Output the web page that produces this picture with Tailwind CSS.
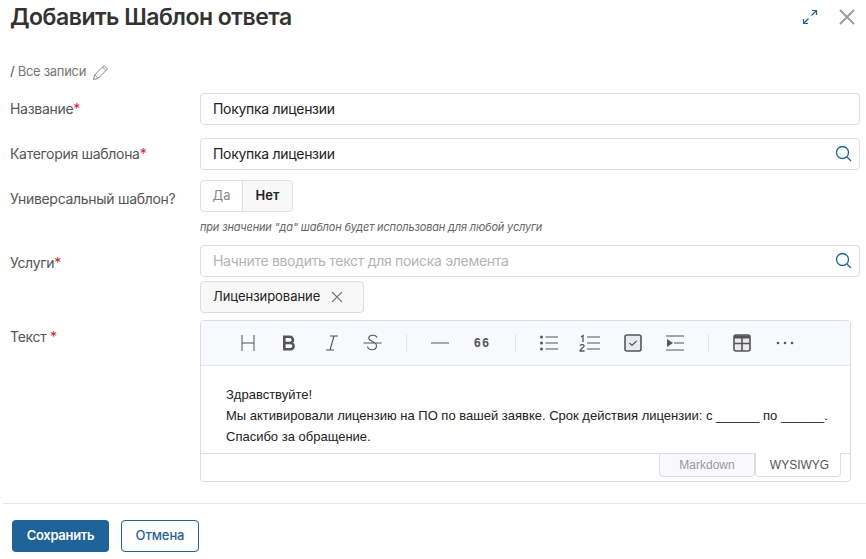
<!DOCTYPE html>
<html lang="ru">
<head>
<meta charset="utf-8">
<script src="https://cdn.jsdelivr.net/npm/@tailwindcss/browser@4"></script>
</head>
<body class="bg-white">
<div class="w-[866px] h-[559px] overflow-hidden flex flex-col font-['Inter',sans-serif] text-[#333]">
  <header class="h-[35px] pl-[10px] pr-[10px] flex items-center justify-between">
    <h1 class="text-[23px] tracking-[-0.5px] leading-[35px] font-semibold text-[#333]">Добавить Шаблон ответа</h1>
    <div class="flex items-center gap-[20px] mt-[-1px]">
      <svg width="16" height="16" viewBox="0 0 16 16" fill="none" stroke="#1f6499" stroke-width="1.2"><path d="M9.5 6.5 14.5 1.5M10 1.5h4.5V6M6.5 9.5l-5 5M1.5 10v4.500H6"/></svg>
      <svg width="18" height="18" viewBox="0 0 18 18" fill="none" stroke="#999" stroke-width="1.8"><path d="M2 2l14 14M16 2 2 16"/></svg>
    </div>
  </header>
  <div class="mt-[28px] pl-[10px] h-[18px] flex items-center gap-[6px] text-[13px] tracking-[-0.3px] text-[#777]">
    <span><span class="text-[#555]">/</span> Все записи</span>
    <svg width="17" height="17" viewBox="0 0 17 17" fill="none" stroke="#888" stroke-width="1"><path d="M12 1.5 15.5 5l-9.5 9.5-4.5 1 1-4.500zM10.500 3l3.500 3.500M3 11l3 3"/></svg>
  </div>
  <form class="mt-[12px] pl-[10px] pr-[6px] flex flex-col tracking-[-0.3px]">
    <div class="flex items-start">
      <label class="w-[190px] text-[14px] leading-[32px] text-[#555]">Название<span class="text-[#d9182d]">*</span></label>
      <div class="w-[660px] h-[32px] border border-[#dddde6] rounded-[4px] px-[12px] text-[14px] leading-[30px] text-[#222]">Покупка лицензии</div>
    </div>
    <div class="flex items-start mt-[13px]">
      <label class="w-[190px] text-[14px] leading-[32px] text-[#555]">Категория шаблона<span class="text-[#d9182d]">*</span></label>
      <div class="w-[660px] h-[32px] border border-[#dddde6] rounded-[4px] pl-[12px] pr-[7px] flex items-start justify-between text-[14px] text-[#222]">
        <span class="leading-[30px]">Покупка лицензии</span>
        <svg class="mt-[6px]" width="17" height="17" viewBox="0 0 17 17" fill="none" stroke="#1f6499" stroke-width="1.300"><circle cx="7.500" cy="7.500" r="6"/><path d="m12 12 4 4"/></svg>
      </div>
    </div>
    <div class="flex items-start mt-[10px]">
      <label class="w-[190px] text-[14px] leading-[38px] text-[#555]">Универсальный шаблон?</label>
      <div class="flex flex-col">
        <div class="flex w-[93px] h-[32px] border border-[#dddde6] rounded-[4px] overflow-hidden text-[13px] tracking-normal">
          <span class="w-[42px] flex items-center justify-center text-[#888] border-r border-[#dddde6]">Да</span>
          <span class="flex-1 flex items-center justify-center font-semibold text-[#222] bg-[#f8f8f8]">Нет</span>
        </div>
        <p class="mt-[8px] text-[11px] leading-[14px] italic tracking-[-0.17px] text-[#666]">при значении "да" шаблон будет использован для любой услуги</p>
      </div>
    </div>
    <div class="flex items-start mt-[11px]">
      <label class="w-[190px] text-[14px] leading-[36px] text-[#555]">Услуги<span class="text-[#d9182d]">*</span></label>
      <div class="flex flex-col">
        <div class="w-[660px] h-[32px] border border-[#dddde6] rounded-[4px] pl-[12px] pr-[7px] flex items-start justify-between text-[14px] text-[#b4b4b4]">
          <span class="leading-[29px]">Начните вводить текст для поиска элемента</span>
          <svg class="mt-[6px]" width="17" height="17" viewBox="0 0 17 17" fill="none" stroke="#1f6499" stroke-width="1.300"><circle cx="7.500" cy="7.500" r="6"/><path d="m12 12 4 4"/></svg>
        </div>
        <div class="mt-[4px] w-[164px] h-[32px] border border-[#dddde6] rounded-[4px] bg-[#f8f8f8] pl-[12px] flex items-center gap-[11px] text-[13px] tracking-[-0.05px] text-[#222]">
          <span>Лицензирование</span>
          <svg width="12" height="12" viewBox="0 0 12 12" fill="none" stroke="#777" stroke-width="1.100"><path d="m1 1 10 10M11 1 1 11"/></svg>
        </div>
      </div>
    </div>
    <div class="flex items-start mt-[7px]">
      <label class="w-[190px] text-[14px] leading-[34px] text-[#555]">Текст <span class="text-[#d9182d]">*</span></label>
      <div class="w-[651px] h-[162px] border border-[#dddde6] rounded-[4px] flex flex-col overflow-hidden tracking-normal">
        <div class="h-[45px] shrink-0 bg-[#f7f9fc] border-b border-[#e4e6ee] flex items-center pl-[40px]">
          <svg class="mr-[27px]" width="14" height="16" viewBox="0 0 14 16" fill="none" stroke="#555" stroke-width="1"><path d="M1 0v16M13 0v16M1 8h12"/></svg>
          <svg class="mr-[29px]" width="14" height="16" viewBox="0 0 14 16" fill="none" stroke="#555" stroke-width="2.600"><path d="M2.300 1.800h5.500a3 3 0 0 1 0 6.200H2.300zM2.300 8h6.200a3.100 3.100 0 0 1 0 6.200H2.300z"/></svg>
          <svg class="mr-[24px]" width="14" height="16" viewBox="0 0 14 16" fill="none" stroke="#555" stroke-width="1.100"><path d="M5 1h8M1 15h8M9 1 5 15"/></svg>
          <svg class="mr-[24px]" width="19" height="18" viewBox="0 0 19 18" fill="none" stroke="#555" stroke-width="1.100"><path d="M0.500 9h18M14 3.500c-.5-1.500-2-2.300-4-2.300-2.500 0-4.300 1.300-4.300 3.200 0 2.800 7.800 3.200 7.800 7.300 0 2.500-2 4-4.500 4-2.500 0-4-1.200-4.500-3"/></svg>
          <span class="w-px h-[18px] bg-[#e1e4ea] mr-[24px]"></span>
          <svg class="mr-[25px]" width="18" height="2" viewBox="0 0 18 2"><path d="M0 1h18" stroke="#555" stroke-width="1.200"/></svg>
          <span class="mr-[26px] w-[15px] whitespace-nowrap font-['Liberation_Sans',sans-serif] text-[12px] leading-none font-bold text-[#555] tracking-[1.500px]">66</span>
          <span class="w-px h-[18px] bg-[#e1e4ea] mr-[24px]"></span>
          <svg class="mr-[21px]" width="18" height="16" viewBox="0 0 18 16" fill="none"><g fill="#555"><circle cx="1.500" cy="2" r="1.500"/><circle cx="1.500" cy="8" r="1.500"/><circle cx="1.500" cy="14" r="1.500"/></g><path d="M5.500 2H18M5.500 8H18M5.500 14H18" stroke="#555" stroke-width="1.200"/></svg>
          <svg class="mr-[24px]" width="21" height="18" viewBox="0 0 21 18" fill="none"><path d="M8 3h13M8 9h13M8 15h13" stroke="#555" stroke-width="1.200"/><path d="M2 3l2-1.500V8M1 11.500c1-1.500 4.500-1.200 4 .8-.3 1.200-4 2.800-4 4.700h4.500" stroke="#555" stroke-width="1.300"/></svg>
          <svg class="mr-[24px]" width="18" height="18" viewBox="0 0 18 18"><rect x="1" y="1" width="16" height="16" rx="2" fill="#e8eaf0" stroke="#555" stroke-width="1.600"/><path d="m5.500 9 2.500 2.500 4.500-4.500" fill="none" stroke="#555" stroke-width="1.200"/></svg>
          <svg class="mr-[24px]" width="18" height="16" viewBox="0 0 18 16" fill="none"><path d="M0 1h18M0 15h18M8 8h10" stroke="#555" stroke-width="1.200"/><path d="M1 4v8l6-4z" fill="#555"/></svg>
          <span class="w-px h-[18px] bg-[#e1e4ea] mr-[24px]"></span>
          <svg class="mr-[25px]" width="18" height="18" viewBox="0 0 18 18"><rect x="1" y="1" width="16" height="16" rx="2" fill="#e8eaf0" stroke="#555" stroke-width="1.600"/><path d="M1 1.500h16V4.500H1z" fill="#555"/><path d="M9 4v13M1 9.500h16" stroke="#555" stroke-width="1.600"/></svg>
          <svg width="18" height="4" viewBox="0 0 18 4" fill="#555"><circle cx="2" cy="2" r="1.300"/><circle cx="9" cy="2" r="1.300"/><circle cx="16" cy="2" r="1.300"/></svg>
        </div>
        <div class="flex-1 pt-[18px] pl-[25px] font-['Liberation_Sans',sans-serif] text-[13px] leading-[21px] text-[#222]">
          <p>Здравствуйте!</p>
          <p>Мы активировали лицензию на ПО по вашей заявке. Срок действия лицензии: с ______ по ______.</p>
          <p>Спасибо за обращение.</p>
        </div>
        <div class="h-[28px] shrink-0 border-t border-[#dddde6] flex justify-end pr-[9px] font-['Liberation_Sans',sans-serif] text-[12px]">
          <span class="w-[96px] h-[24px] mt-[-1px] bg-[#f7f9fc] border border-[#dddde6] rounded-b-[4px] flex items-center justify-center text-[#999]">Markdown</span>
          <span class="w-[86px] h-[24px] mt-[-1px] pl-[3px] bg-white border border-t-0 border-[#dddde6] rounded-b-[4px] flex items-center justify-center text-[#555]">WYSIWYG</span>
        </div>
      </div>
    </div>
  </form>
  <footer class="mt-[21px] ml-[3px] border-t border-[#e6e6ea] pl-[9px] pt-[16px] flex gap-[12px] text-[13px]">
    <button class="w-[97px] h-[32px] rounded-[4px] bg-[#1f6499] text-white font-semibold tracking-[-0.3px]">Сохранить</button>
    <button class="w-[78px] h-[32px] rounded-[4px] border border-[#1f6499] text-[#1f6499] font-medium tracking-[-0.1px]">Отмена</button>
  </footer>
</div>
</body>
</html>
